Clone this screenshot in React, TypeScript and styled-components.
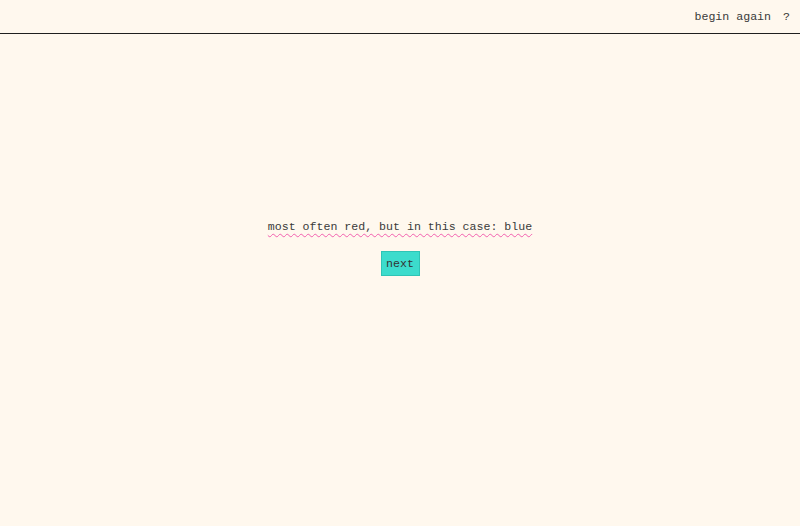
import React from 'react';
import styled, { createGlobalStyle } from 'styled-components';

const GlobalStyle = createGlobalStyle`
  html, body {
    margin: 0;
    padding: 0;
    background: #fff8ee;
  }
  body {
    font-family: 'Liberation Mono', 'Courier New', monospace;
    color: #333;
  }
`;

const App = () => {
  return (
    <Page>
      <GlobalStyle />
      <Header>
        <HeaderLink>begin again</HeaderLink>
        <HeaderLink>?</HeaderLink>
      </Header>
      <Main>
        <Prompt>most often red, but in this case: blue</Prompt>
        <NextButton>next</NextButton>
      </Main>
    </Page>
  );
};

export default App;

const Page = styled.div`
  display: flex;
  flex-direction: column;
  min-height: 526px;
`;

const Header = styled.div`
  display: flex;
  justify-content: flex-end;
  align-items: center;
  gap: 12px;
  height: 34px;
  padding: 0 10px 0 0;
  border-bottom: 1px solid #1f1f1f;
  box-sizing: border-box;
`;

const HeaderLink = styled.span`
  font-size: 11.6px;
  color: #3a3a3a;
  cursor: pointer;
`;

const Main = styled.div`
  display: flex;
  flex-direction: column;
  align-items: center;
  padding-top: 186px;
`;

const Prompt = styled.div`
  font-size: 11.6px;
  color: #3a3a3a;
  text-decoration: underline wavy #f25fae;
  text-decoration-thickness: 1px;
  text-underline-offset: 3px;
`;

const NextButton = styled.button`
  margin-top: 18px;
  width: 39px;
  height: 25px;
  padding: 0;
  background: #3cdccc;
  border: 1px solid #2fc4b5;
  border-radius: 0;
  font-family: 'Liberation Mono', 'Courier New', monospace;
  font-size: 11.6px;
  color: #333;
  cursor: pointer;
`;
